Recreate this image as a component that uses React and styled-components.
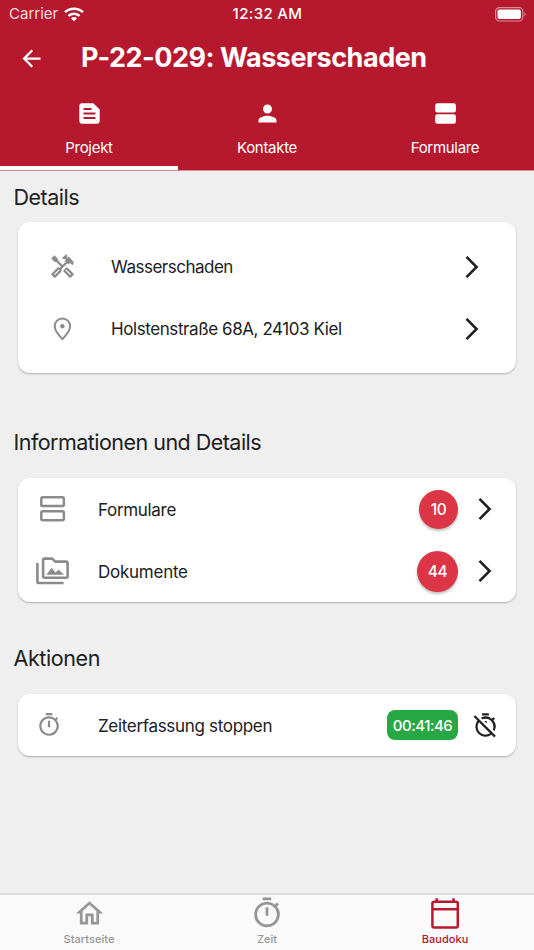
import React from 'react';
import styled, { createGlobalStyle } from 'styled-components';
import {
  MdArrowBack, MdPerson, MdOutlineHandyman, MdOutlineTimer, MdOutlineTimerOff, MdOutlineHome,
} from 'react-icons/md';

const Global = createGlobalStyle`
  *, *::before, *::after { box-sizing: border-box; }
  body { margin: 0; background: #efefef; }
  svg { display: block; flex: none; }
`;

const Screen = styled.div`
  width: 534px;
  height: 950px;
  display: flex;
  flex-direction: column;
  overflow: hidden;
  background: #efefef;
  color: #202022;
  font-family: Inter, "Liberation Sans", sans-serif;
`;

const Header = styled.header`
  height: 170px;
  flex: none;
  display: flex;
  flex-direction: column;
  background: #b6182e;
  box-shadow: 0 1px 0 #d98894;
  color: #fff;
`;

const StatusBar = styled.div`
  height: 28px;
  display: grid;
  grid-template-columns: 1fr auto 1fr;
  align-items: center;
  padding: 0 8px 0 9px;
  font-size: 15px;
  line-height: 28px;
`;

const Carrier = styled.div`
  display: flex;
  align-items: center;
  gap: 6px;
  letter-spacing: 0;
  color: #f7dfe2;
`;

const Clock = styled.div`
  font-weight: 500;
  letter-spacing: 0.35px;
`;

const BatterySlot = styled.div`
  display: flex;
  justify-content: flex-end;
`;

const TitleBar = styled.div`
  height: 60px;
  display: flex;
  align-items: center;
  padding-left: 18px;
`;

const Title = styled.h1`
  margin: 0 0 0 36px;
  font-size: 27px;
  line-height: 34px;
  font-weight: 700;
  letter-spacing: -0.48px;
  white-space: nowrap;
`;

const Tabs = styled.nav`
  flex: 1;
  display: grid;
  grid-template-columns: repeat(3, 1fr);
`;

const Tab = styled.div`
  display: flex;
  flex-direction: column;
  align-items: center;
  padding-top: 12px;
  border-bottom: 4px solid ${(p) => (p.$active ? '#fff' : 'transparent')};
`;

const TabLabel = styled.span`
  margin-top: 10px;
  font-size: 15px;
  line-height: 21px;
  letter-spacing: -0.3px;
`;

const Content = styled.main`
  flex: 1;
  padding: 0 18px;
`;

const SectionTitle = styled.h2`
  margin: ${(p) => p.$top}px 0 ${(p) => p.$bottom}px -4.5px;
  font-size: 21.5px;
  line-height: 28px;
  font-weight: 400;
  letter-spacing: ${(p) => p.$tracking}px;
`;

const Card = styled.section`
  padding: ${(p) => (p.$inset ? '13.5px 30px 13.5px 13px' : '0 17px 0 0')};
  border-radius: 12px;
  background: #fff;
  box-shadow: 0 1px 2px rgba(0, 0, 0, 0.28);
`;

const Row = styled.div`
  height: 62px;
  display: flex;
  align-items: center;
`;

const RowIcon = styled.span`
  width: 80px;
  padding-left: 18px;
  flex: none;
  color: #8b8b8b;
`;

const RowLabel = styled.span`
  flex: 1;
  padding-top: 1px;
  font-size: 17px;
  line-height: 24px;
  letter-spacing: ${(p) => p.$tracking}px;
  white-space: nowrap;
`;

const CountBadge = styled.span`
  width: ${(p) => p.$size}px;
  height: ${(p) => p.$size}px;
  margin-right: 15px;
  display: grid;
  place-items: center;
  border-radius: 50%;
  background: #dc3545;
  box-shadow: 0 2px 3px rgba(0, 0, 0, 0.26);
  color: #fff;
  font-size: 15.5px;
  font-weight: 500;
  letter-spacing: -0.4px;
`;

const TimeBadge = styled.span`
  width: 71px;
  height: 30px;
  margin-right: 14px;
  display: grid;
  place-items: center;
  border-radius: 8px;
  background: #28a745;
  color: #fff;
  font-size: 15px;
  font-weight: 500;
  letter-spacing: -0.5px;
`;

const BottomNav = styled.nav`
  height: 57px;
  flex: none;
  display: grid;
  grid-template-columns: repeat(3, 1fr);
  border-top: 2px solid #dedcde;
  background: #fafafa;
`;

const NavItem = styled.div`
  display: flex;
  flex-direction: column;
  align-items: center;
  color: ${(p) => (p.$active ? '#b6182e' : '#969696')};
`;

const NavIcon = styled.span`
  height: 36px;
  display: flex;
  align-items: center;
`;

const NavLabel = styled.span`
  font-size: 11px;
  line-height: 16px;
  font-weight: 450;
  letter-spacing: 0.05px;
`;

const Wifi = () => (
  <svg width="20" height="15" viewBox="0 0 20 15" fill="none" stroke="#fff" strokeWidth="2.5">
    <path d="M1 5.2C6 .5 14 .5 19 5.2" />
    <path d="M4.4 8.8C7.5 5.9 12.5 5.9 15.6 8.8" />
    <path d="M10 14.3 6.9 11.2C8.6 9.6 11.4 9.6 13.1 11.2Z" fill="#fff" stroke="none" />
  </svg>
);

const Battery = () => (
  <svg width="31" height="15" viewBox="0 0 31 15">
    <rect x=".6" y=".6" width="27.2" height="13.4" rx="3.8" fill="none" stroke="#db8c97" strokeWidth="1.2" />
    <rect x="2.5" y="2.5" width="23.4" height="9.6" rx="2" fill="#fff" />
    <path d="M29.4 5v4.5c1.6-.8 1.6-3.7 0-4.5Z" fill="#db8c97" />
  </svg>
);

const FeedIcon = () => (
  <svg width="27" height="27" viewBox="0 0 27 27">
    <path d="M5.7 3.2H17.3L23.7 9.4V21.3a2.4 2.4 0 0 1-2.4 2.4H5.7a2.4 2.4 0 0 1-2.4-2.4V5.6a2.4 2.4 0 0 1 2.4-2.4Z" fill="#fff" />
    <path d="M7.5 9H15.5M7.5 13.5H19.5M7.5 18H19.5" stroke="#b6182e" strokeWidth="2.1" />
  </svg>
);

const StackFilledIcon = () => (
  <svg width="27" height="27" viewBox="0 0 27 27" fill="#fff">
    <rect x="3.2" y="3.2" width="20.7" height="9.3" rx="2.2" />
    <rect x="3.2" y="14.2" width="20.7" height="9.5" rx="2.2" />
  </svg>
);

const StackIcon = () => (
  <svg width="34" height="34" viewBox="0 0 34 34" fill="none" stroke="currentColor" strokeWidth="2.5">
    <rect x="5.3" y="5.3" width="22.6" height="8.8" rx="1.6" />
    <rect x="5.3" y="19.3" width="22.6" height="8.9" rx="1.6" />
  </svg>
);

const MediaIcon = () => (
  <svg width="34" height="34" viewBox="0 0 34 34" fill="none" stroke="currentColor" strokeWidth="2.6" strokeLinejoin="round">
    <path d="M8.4 4.6H16.2L19.2 7.6H30.3a1.3 1.3 0 0 1 1.3 1.3V22.5a1.3 1.3 0 0 1-1.3 1.3H8.4a1.3 1.3 0 0 1-1.3-1.3V5.9a1.3 1.3 0 0 1 1.3-1.3Z" />
    <path d="M1.4 9V27.4a1.6 1.6 0 0 0 1.6 1.6H27.6" />
    <path d="M10.4 20.8 15.6 13.8 19.4 18.5 22.7 15.8 28 20.8Z" fill="currentColor" stroke="none" />
  </svg>
);

const PinIcon = () => (
  <svg width="26" height="26" viewBox="0 0 26 26" fill="none" stroke="currentColor" strokeWidth="2">
    <path d="M13.4 23.1C9.4 19.1 5.7 14.8 5.7 10.1a7.7 7.7 0 0 1 15.4 0C21.1 14.8 17.4 19.1 13.4 23.1Z" />
    <circle cx="13.4" cy="10.2" r="2.2" fill="currentColor" stroke="none" />
  </svg>
);

const CalendarIcon = () => (
  <svg width="34" height="34" viewBox="0 0 34 34" fill="none" stroke="currentColor" strokeWidth="2.5">
    <rect x="4.4" y="5.7" width="25.4" height="25.8" rx="1.8" />
    <path d="M4.4 13.2H29.8" />
    <path d="M8.7 2.2V6M25.5 2.2V6" />
  </svg>
);

const Chevron = () => (
  <svg width="26" height="26" viewBox="0 0 26 26" fill="none" stroke="#202022" strokeWidth="2.6">
    <path d="M6.5 2.9 16.6 13 6.5 23.1" />
  </svg>
);

export default function App() {
  return (
    <>
      <Global />
      <Screen>
        <Header>
          <StatusBar>
            <Carrier>Carrier <Wifi /></Carrier>
            <Clock>12:32 AM</Clock>
            <BatterySlot><Battery /></BatterySlot>
          </StatusBar>
          <TitleBar>
            <MdArrowBack size={27} />
            <Title>P-22-029: Wasserschaden</Title>
          </TitleBar>
          <Tabs>
            <Tab $active><FeedIcon /><TabLabel>Projekt</TabLabel></Tab>
            <Tab><MdPerson size={27} /><TabLabel>Kontakte</TabLabel></Tab>
            <Tab><StackFilledIcon /><TabLabel>Formulare</TabLabel></Tab>
          </Tabs>
        </Header>
        <Content>
          <SectionTitle $top={13} $bottom={11} $tracking={-0.5}>Details</SectionTitle>
          <Card $inset>
            <Row>
              <RowIcon><MdOutlineHandyman size={27} /></RowIcon>
              <RowLabel $tracking={-0.5}>Wasserschaden</RowLabel>
              <Chevron />
            </Row>
            <Row>
              <RowIcon><PinIcon /></RowIcon>
              <RowLabel $tracking={-0.42}>Holstenstraße 68A, 24103 Kiel</RowLabel>
              <Chevron />
            </Row>
          </Card>
          <SectionTitle $top={55} $bottom={22} $tracking={-0.53}>Informationen und Details</SectionTitle>
          <Card>
            <Row>
              <RowIcon><StackIcon /></RowIcon>
              <RowLabel $tracking={-0.32}>Formulare</RowLabel>
              <CountBadge $size={39}>10</CountBadge>
              <Chevron />
            </Row>
            <Row>
              <RowIcon><MediaIcon /></RowIcon>
              <RowLabel $tracking={-0.25}>Dokumente</RowLabel>
              <CountBadge $size={41}>44</CountBadge>
              <Chevron />
            </Row>
          </Card>
          <SectionTitle $top={42} $bottom={22} $tracking={-0.4}>Aktionen</SectionTitle>
          <Card>
            <Row>
              <RowIcon><MdOutlineTimer size={26} /></RowIcon>
              <RowLabel $tracking={-0.32}>Zeiterfassung stoppen</RowLabel>
              <TimeBadge>00:41:46</TimeBadge>
              <MdOutlineTimerOff size={27} />
            </Row>
          </Card>
        </Content>
        <BottomNav>
          <NavItem><NavIcon><MdOutlineHome size={33} /></NavIcon><NavLabel>Startseite</NavLabel></NavItem>
          <NavItem><NavIcon><MdOutlineTimer size={34} /></NavIcon><NavLabel>Zeit</NavLabel></NavItem>
          <NavItem $active><NavIcon><CalendarIcon /></NavIcon><NavLabel>Baudoku</NavLabel></NavItem>
        </BottomNav>
      </Screen>
    </>
  );
}
